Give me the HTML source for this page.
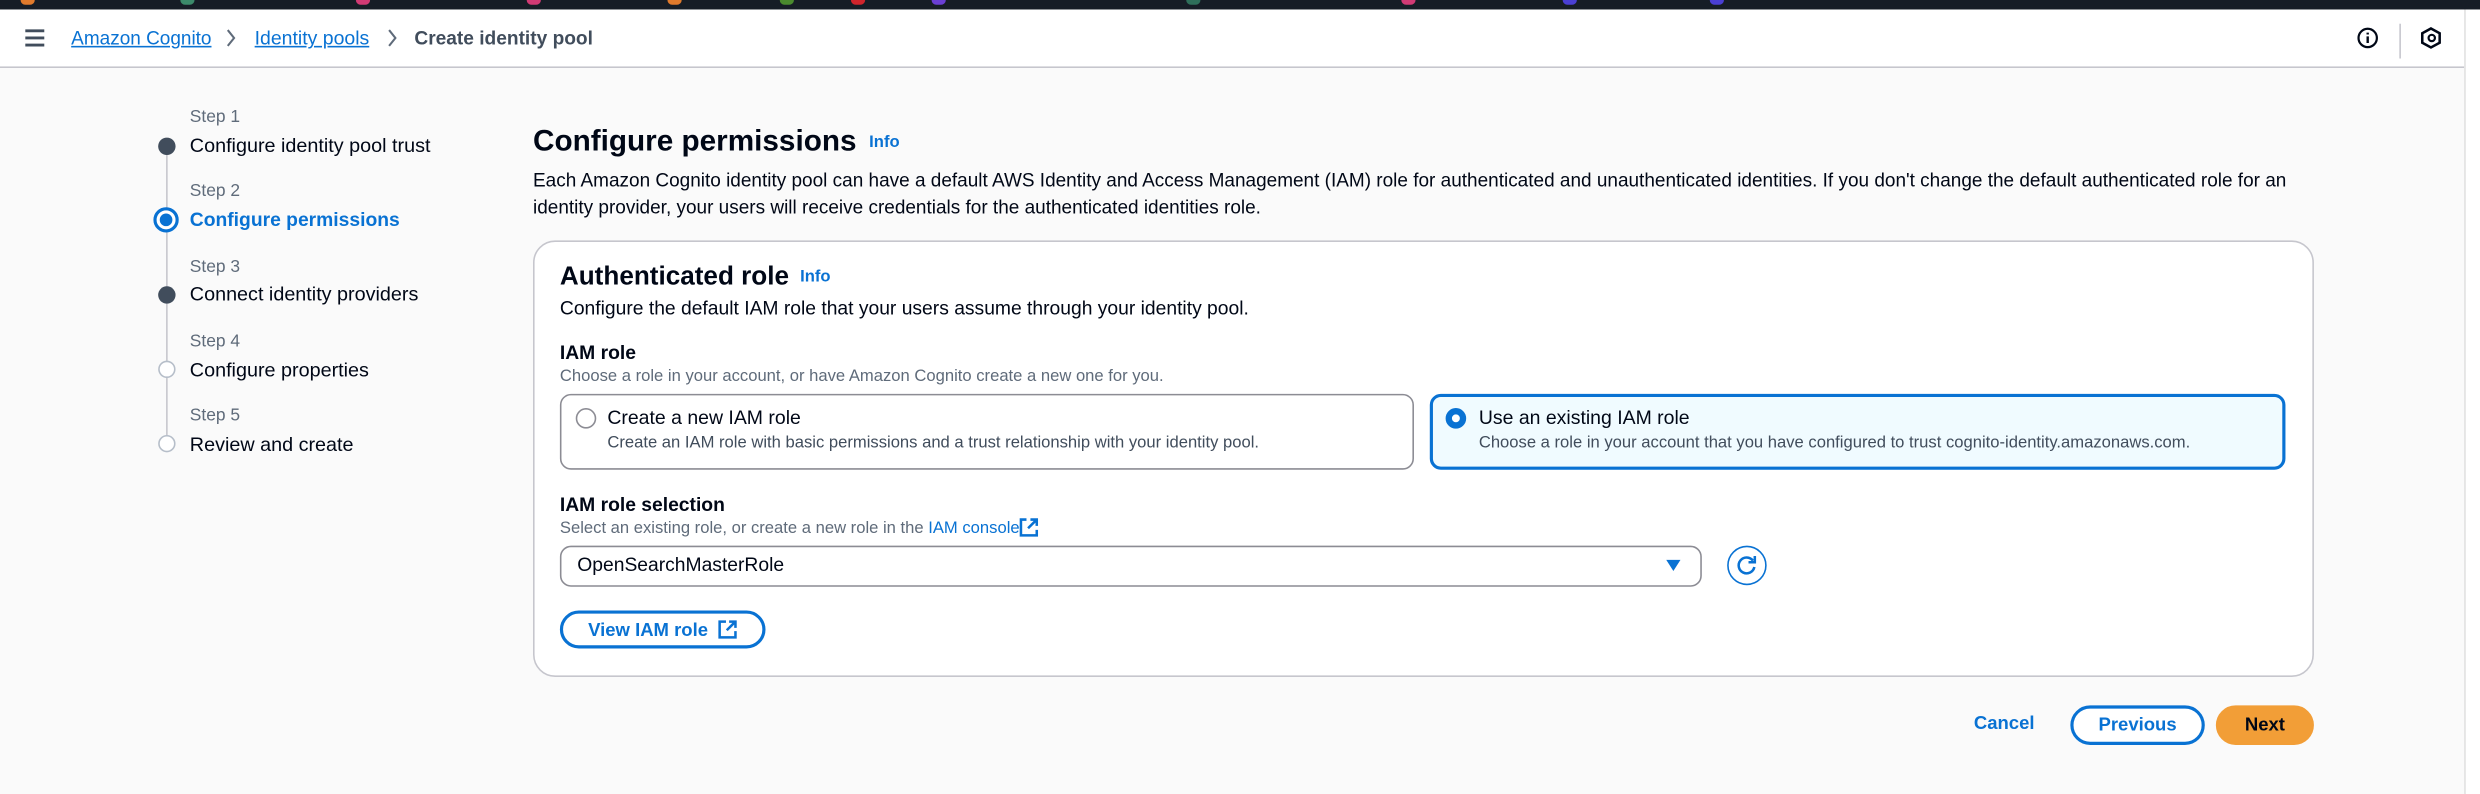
<!DOCTYPE html>
<html><head><meta charset="utf-8"><style>
*{box-sizing:border-box;margin:0;padding:0}
html,body{width:2480px;height:794px;overflow:hidden;background:#fafafa}
#w{position:absolute;left:0;top:0;width:1568px;height:502px;transform:scale(1.58163);transform-origin:0 0;font-family:"Liberation Sans",sans-serif;color:#000716;background:#fafafa}
.a{position:absolute;white-space:nowrap}
.top{position:absolute;left:0;top:0;width:1568px;height:6px;background:#161d26}
.top i{position:absolute;top:0;width:9px;height:3px;border-radius:0 0 3px 3px}
.hdr{position:absolute;left:0;top:6px;width:1558px;height:37px;background:#fff;border-bottom:1px solid #c6c6cd}
.lk{color:#0972d3;text-decoration:underline}
.sl{font-size:11px;color:#5f6b7a}
.st{font-size:12.5px;color:#000716}
.dot{position:absolute;left:100px;width:11px;height:11px;border-radius:50%}
.box{position:absolute;left:337px;top:152px;width:1126px;height:276px;background:#fff;border:1px solid #c6c6cd;border-radius:14px}
.tile{position:absolute;top:249px;height:48px;border:1px solid #8c8c94;border-radius:7px;background:#fff}
.t1{font-size:12.3px}
.t2{font-size:10.5px;color:#414d5c}
.info{font-size:10.5px;font-weight:bold;color:#0972d3;margin-left:7px;vertical-align:2px}
.btn{position:absolute;border:2px solid #0972d3;border-radius:20px;color:#0972d3;font-weight:bold;font-size:11.7px;display:flex;align-items:center;justify-content:center;background:#fff}
</style></head><body><div id="w">
<div class="top">
<i style="left:13px;background:#e07a2c"></i><i style="left:114px;background:#3b8a6a"></i><i style="left:225px;background:#d13a74"></i><i style="left:333px;background:#d13a74"></i><i style="left:422px;background:#e07a2c"></i><i style="left:493px;background:#4a8a2e"></i><i style="left:538px;background:#d0252c"></i><i style="left:589px;background:#6a3fd4"></i><i style="left:750px;background:#2e6f5a"></i><i style="left:886px;background:#d13a74"></i><i style="left:988px;background:#4a3fd4"></i><i style="left:1081px;background:#4a3fd4"></i>
</div>
<div class="hdr"></div>
<div style="position:absolute;left:1558px;top:6px;width:10px;height:496px;background:#fff;border-left:1px solid #e0e0e0"></div>
<svg class="a" style="left:15px;top:18px" width="14" height="12"><path d="M1 1.5h12M1 6h12M1 10.5h12" stroke="#414d5c" stroke-width="1.8"/></svg>
<div class="a lk" style="left:45px;top:17px;font-size:12px">Amazon Cognito</div>
<svg class="a" style="left:142px;top:18px" width="8" height="12"><path d="M2 1l4 5-4 5" stroke="#5f6b7a" stroke-width="1.3" fill="none"/></svg>
<div class="a lk" style="left:161px;top:17px;font-size:12.3px">Identity pools</div>
<svg class="a" style="left:244px;top:18px" width="8" height="12"><path d="M2 1l4 5-4 5" stroke="#5f6b7a" stroke-width="1.3" fill="none"/></svg>
<div class="a" style="left:262px;top:17px;font-size:12.1px;font-weight:bold;color:#414d5c">Create identity pool</div>
<svg class="a" style="left:1490px;top:17px" width="14" height="14"><circle cx="7" cy="7" r="5.8" stroke="#000716" stroke-width="1.4" fill="none"/><path d="M7 6v4.2M7 3.6v1.2" stroke="#000716" stroke-width="1.5"/></svg>
<div class="a" style="left:1517px;top:15px;width:1px;height:22px;background:#c6c6cd"></div>
<svg class="a" style="left:1530px;top:17px" width="14" height="14"><path d="M7 1l5.5 3v6L7 13 1.5 10V4z" stroke="#000716" stroke-width="1.6" fill="none"/><circle cx="7.5" cy="7" r="2" stroke="#000716" stroke-width="1.4" fill="none"/></svg>

<!-- steps -->
<div class="a" style="left:104.5px;top:92px;width:1.5px;height:190px;background:#c6c6cd"></div>
<div class="a sl" style="left:120px;top:68px">Step 1</div>
<div class="a st" style="left:120px;top:85px">Configure identity pool trust</div>
<div class="dot" style="top:87px;background:#414d5c"></div>
<div class="a sl" style="left:120px;top:115px">Step 2</div>
<div class="a st" style="left:120px;top:132px;color:#0972d3;font-weight:bold;font-size:12.2px">Configure permissions</div>
<div class="dot" style="left:97px;top:131px;width:16px;height:16px;border:2px solid #0972d3;background:#fff"></div>
<div class="dot" style="left:101px;top:135px;width:8px;height:8px;background:#0972d3"></div>
<div class="a sl" style="left:120px;top:163px">Step 3</div>
<div class="a st" style="left:120px;top:179px">Connect identity providers</div>
<div class="dot" style="top:181px;background:#414d5c"></div>
<div class="a sl" style="left:120px;top:210px">Step 4</div>
<div class="a st" style="left:120px;top:227px">Configure properties</div>
<div class="dot" style="top:228px;background:#fff;border:1.5px solid #b6bec9"></div>
<div class="a sl" style="left:120px;top:257px">Step 5</div>
<div class="a st" style="left:120px;top:274px">Review and create</div>
<div class="dot" style="top:275px;background:#fff;border:1.5px solid #b6bec9"></div>

<!-- main -->
<div class="a" style="left:337px;top:78px;font-size:18.8px;font-weight:bold">Configure permissions<span class="info" style="font-size:10.5px;margin-left:8px">Info</span></div>
<div class="a" style="left:337px;top:106px;width:1130px;white-space:normal;font-size:12px;line-height:17px;color:#000716">Each Amazon Cognito identity pool can have a default AWS Identity and Access Management (IAM) role for authenticated and unauthenticated identities. If you don't change the default authenticated role for an identity provider, your users will receive credentials for the authenticated identities role.</div>

<div class="box"></div>
<div class="a" style="left:354px;top:166px;font-size:16.5px;font-weight:bold">Authenticated role<span class="info">Info</span></div>
<div class="a" style="left:354px;top:188px;font-size:12.2px">Configure the default IAM role that your users assume through your identity pool.</div>
<div class="a" style="left:354px;top:216px;font-size:12.2px;font-weight:bold">IAM role</div>
<div class="a" style="left:354px;top:232px;font-size:10.5px;color:#5f6b7a">Choose a role in your account, or have Amazon Cognito create a new one for you.</div>

<div class="tile" style="left:354px;width:540px"></div>
<div class="a" style="left:364px;top:258px;width:13px;height:13px;border-radius:50%;border:1.3px solid #8c8c94;background:#fff"></div>
<div class="a t1" style="left:384px;top:257px">Create a new IAM role</div>
<div class="a t2" style="left:384px;top:274px">Create an IAM role with basic permissions and a trust relationship with your identity pool.</div>

<div class="tile" style="left:904px;width:541px;border:2px solid #0972d3;background:#f0fbff"></div>
<div class="a" style="left:914px;top:258px;width:13px;height:13px;border-radius:50%;border:4px solid #0972d3;background:#fff"></div>
<div class="a t1" style="left:935px;top:257px">Use an existing IAM role</div>
<div class="a t2" style="left:935px;top:274px">Choose a role in your account that you have configured to trust cognito-identity.amazonaws.com.</div>

<div class="a" style="left:354px;top:312px;font-size:12.2px;font-weight:bold">IAM role selection</div>
<div class="a" style="left:354px;top:328px;font-size:10.5px;color:#5f6b7a">Select an existing role, or create a new role in the <span style="color:#0972d3">IAM console</span></div>
<svg class="a" style="left:644px;top:327px" width="13" height="13"><path d="M5 1.5H1.5v10h10V8M7.5 1.5h4v4M11.5 1.5L6 7" stroke="#0972d3" stroke-width="1.6" fill="none"/></svg>
<div class="a" style="left:354px;top:345px;width:722px;height:26px;border:1px solid #8c8c94;border-radius:7px;background:#fff"></div>
<div class="a" style="left:365px;top:350px;font-size:12.2px">OpenSearchMasterRole</div>
<svg class="a" style="left:1053px;top:353px" width="10" height="9"><path d="M0.5 1h9L5 8z" fill="#0972d3"/></svg>
<div class="a" style="left:1092px;top:345px;width:25px;height:25px;border-radius:50%;border:1.5px solid #0972d3;background:#fff"></div>
<svg class="a" style="left:1097px;top:350px" width="15" height="15"><path d="M11.3 4.5A5 5 0 1 0 12.2 8.5" stroke="#0972d3" stroke-width="1.6" fill="none"/><path d="M12.5 1.5v4h-4" stroke="#0972d3" stroke-width="1.6" fill="none"/></svg>
<div class="btn" style="left:354px;top:386px;width:130px;height:24px">View IAM role&nbsp;&nbsp;<svg width="12" height="12"><path d="M5 1H1v10h10V7M7 1h4v4M11 1L5.5 6.5" stroke="#0972d3" stroke-width="1.6" fill="none"/></svg></div>

<div class="a" style="left:1248px;top:451px;font-size:11.7px;font-weight:bold;color:#0972d3">Cancel</div>
<div class="btn" style="left:1309px;top:446px;width:85px;height:25px">Previous</div>
<div class="btn" style="left:1401px;top:446px;width:62px;height:25px;background:#f29e37;border-color:#f29e37;color:#000716">Next</div>
</div></body></html>
